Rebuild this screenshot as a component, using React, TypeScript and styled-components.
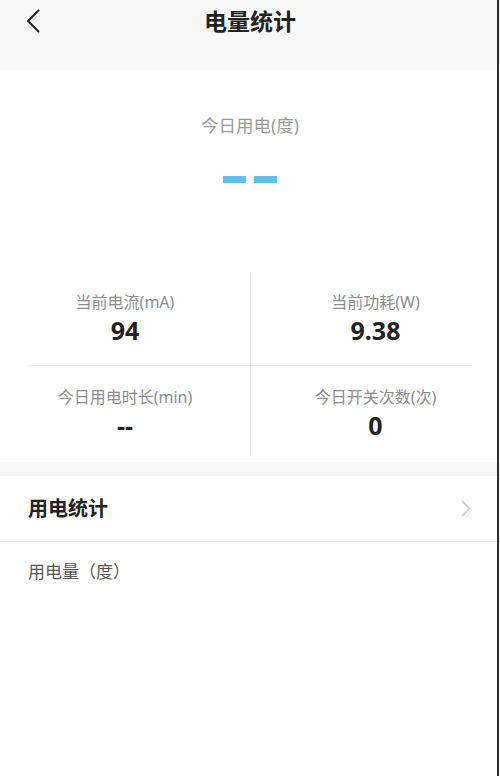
import { FC } from "react";
import styled, { createGlobalStyle } from "styled-components";

const GlobalStyle = createGlobalStyle`
	html, body {
		margin: 0;
		padding: 0;
		background: #ffffff;
	}
	body {
		font-family: "Noto Sans", "Noto Sans CJK SC", sans-serif;
		color: #222;
	}
`;

interface IStat {
	label: string;
	value: string;
}

const stats: IStat[] = [
	{ label: "当前电流(mA)", value: "94" },
	{ label: "当前功耗(W)", value: "9.38" },
	{ label: "今日用电时长(min)", value: "--" },
	{ label: "今日开关次数(次)", value: "0" },
];

const App: FC = () => {
	return (
		<>
			<GlobalStyle />
			<Page>
				<Header>
					<BackButton aria-label="返回">
						<svg width="14" height="24" viewBox="0 0 14 24" fill="none">
							<path
								d="M12.5 1.5 L2 12 L12.5 22.5"
								stroke="#222"
								strokeWidth="2"
								strokeLinecap="round"
								strokeLinejoin="round"
							/>
						</svg>
					</BackButton>
					<Title>电量统计</Title>
				</Header>

				<Today>
					<TodayLabel>今日用电(度)</TodayLabel>
					<Placeholder aria-label="--">
						<Dash />
						<Dash />
					</Placeholder>
					<StatGrid>
						{stats.map((stat, i) => (
							<StatCell key={stat.label} $col={i % 2} $top={i < 2}>
								<StatLabel>{stat.label}</StatLabel>
								<StatValue>{stat.value}</StatValue>
							</StatCell>
						))}
					</StatGrid>
				</Today>

				<Gap />

				<ListRow>
					<RowTitle>用电统计</RowTitle>
					<svg width="10" height="17" viewBox="0 0 10 17" fill="none">
						<path
							d="M1.5 1.5 L8.5 8.5 L1.5 15.5"
							stroke="#cfcfcf"
							strokeWidth="1.8"
							strokeLinecap="round"
							strokeLinejoin="round"
						/>
					</svg>
				</ListRow>
				<SubTitle>用电量（度）</SubTitle>
			</Page>
			<EdgeLine />
		</>
	);
};

const Page = styled.div`
	width: 100%;
	min-height: 776px;
	background: #fff;
`;

const Header = styled.header`
	height: 70px;
	background: #f7f7f7;
	display: flex;
	justify-content: center;
	align-items: flex-start;
	position: relative;
`;

const BackButton = styled.button`
	position: absolute;
	left: 26px;
	top: 9px;
	border: none;
	background: none;
	padding: 0;
	display: flex;
`;

const Title = styled.h1`
	margin: 0;
	padding-top: 5px;
	font-size: 23px;
	line-height: 32px;
	font-weight: 700;
	color: #222;
`;

const Today = styled.section`
	display: flex;
	flex-direction: column;
	align-items: center;
	padding-top: 43px;
	padding-bottom: 6px;
`;

const TodayLabel = styled.div`
	font-size: 17.5px;
	line-height: 24px;
	color: #999;
`;

const Placeholder = styled.div`
	display: flex;
	gap: 8px;
	margin-top: 39px;
`;

const Dash = styled.span`
	display: block;
	width: 23px;
	height: 7px;
	background: #5fc0ea;
`;

const StatGrid = styled.div`
	width: 100%;
	margin-top: 89px;
	display: grid;
	grid-template-columns: 1fr 1fr;
	grid-template-rows: 94px 90px;
`;

const StatCell = styled.div<{ $col: number; $top: boolean }>`
	display: flex;
	flex-direction: column;
	align-items: center;
	padding-top: ${(p) => (p.$top ? "19px" : "20px")};
	border-left: ${(p) => (p.$col === 1 ? "1px solid #f1f1f1" : "none")};
	background: ${(p) =>
		p.$top ? "linear-gradient(#efefef, #efefef) no-repeat" : "none"};
	background-size: calc(100% - 28px) 1px;
	background-position: ${(p) => (p.$col === 0 ? "right bottom" : "left bottom")};
`;

const StatLabel = styled.div`
	font-size: 16px;
	line-height: 22px;
	color: #8c8c8c;
`;

const StatValue = styled.div`
	margin-top: 2px;
	font-size: 25px;
	line-height: 30px;
	font-weight: 700;
	color: #222;
`;

const Gap = styled.div`
	height: 14px;
	background: #f5f5f5;
`;

const ListRow = styled.div`
	height: 65px;
	display: flex;
	align-items: center;
	justify-content: space-between;
	padding: 0 29px 0 28px;
	border-bottom: 1px solid #f1f1f1;
`;

const RowTitle = styled.div`
	font-size: 20px;
	line-height: 28px;
	font-weight: 700;
	color: #222;
`;

const SubTitle = styled.div`
	padding: 18px 28px 0;
	font-size: 17px;
	line-height: 24px;
	color: #555;
`;

const EdgeLine = styled.div`
	position: fixed;
	top: 0;
	right: 1px;
	width: 2px;
	height: 100%;
	background: #2e2e2e;
`;

export default App;
